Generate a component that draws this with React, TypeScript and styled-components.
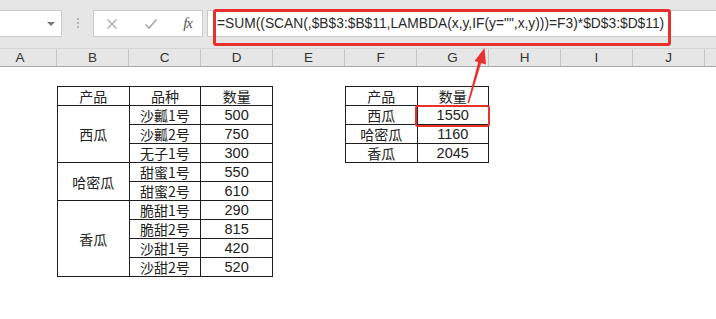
import React from 'react';
import styled, { createGlobalStyle } from 'styled-components';

const GlobalStyle = createGlobalStyle`
  html, body {
    margin: 0;
    padding: 0;
    background: #fff;
  }
  body {
    font-family: "Liberation Sans", "Noto Sans CJK SC", sans-serif;
    color: #222;
  }
`;

const COLS = '57px repeat(9, 72px) 1fr';
const RED = '#e8312c';

const Window = styled.div`
  position: relative;
  width: 716px;
  height: 319px;
  overflow: hidden;
  background: #fff;
`;

/* ---- formula bar ---- */

const FormulaBar = styled.div`
  display: flex;
  align-items: flex-start;
  height: 48px;
  padding-top: 10px;
  box-sizing: border-box;
  background: #e6e6e6;
`;

const Field = styled.div`
  height: 27px;
  box-sizing: border-box;
  background: #fff;
  border: 1px solid #cacaca;
  display: flex;
  align-items: center;
`;

const NameBox = styled(Field)`
  width: 62px;
  border-left: none;
  justify-content: flex-end;
  padding-right: 6px;
`;

const DropCaret = styled.span`
  width: 0;
  height: 0;
  border-left: 4px solid transparent;
  border-right: 4px solid transparent;
  border-top: 4px solid #777;
`;

const Grip = styled.div`
  display: flex;
  flex-direction: column;
  gap: 2px;
  margin: 8px 14px 0 15px;
  span {
    width: 2px;
    height: 2px;
    background: #b3b3b3;
  }
`;

const FuncBox = styled(Field)`
  width: 110px;
  padding: 0 10px 0 12px;
  justify-content: space-between;
`;

const Fx = styled.span`
  font-family: "Liberation Serif", serif;
  font-style: italic;
  font-size: 15px;
  color: #555;
  letter-spacing: -1px;
`;

const FormulaBox = styled(Field)`
  position: relative;
  flex: 1;
  margin-left: 4px;
  border-right: none;
  padding-left: 9px;
`;

const FormulaText = styled.span`
  font-family: "Liberation Sans", sans-serif;
  font-size: 13.8px;
  color: #2a2a2a;
  white-space: nowrap;
`;

const Callout = styled.div`
  position: absolute;
  left: 5px;
  top: -2px;
  width: 458px;
  height: 37px;
  box-sizing: border-box;
  border: 3px solid ${RED};
  border-radius: 3px;
  pointer-events: none;
`;

/* ---- column headers ---- */

const HeaderRow = styled.div`
  display: grid;
  grid-template-columns: ${COLS};
  height: 19px;
  box-sizing: border-box;
  background: #e6e6e6;
  border-top: 1px solid #d6d6d6;
  border-bottom: 1px solid #a8a8a8;
`;

const ColHead = styled.div<{ $first?: boolean }>`
  border-right: 1px solid #c4c4c4;
  display: flex;
  align-items: center;
  justify-content: center;
  font-size: 13.5px;
  color: #333;
  padding-right: ${p => (p.$first ? '16px' : '0')};
  &:last-child {
    border-right: none;
  }
`;

/* ---- sheet ---- */

const Sheet = styled.div`
  display: grid;
  grid-template-columns: ${COLS};
  grid-auto-rows: 19px;
`;

const Block = styled.div<{ $col: string; $row: string }>`
  grid-column: ${p => p.$col};
  grid-row: ${p => p.$row};
`;

const Table = styled.table`
  width: 100%;
  height: 100%;
  border-collapse: collapse;
  table-layout: fixed;
`;

const Cell = styled.td<{ $num?: boolean; $mark?: boolean }>`
  position: relative;
  border: 1px solid #1e1e1e;
  padding: 0;
  height: 18px;
  text-align: center;
  vertical-align: middle;
  font-family: ${p =>
    p.$num ? '"Liberation Sans", sans-serif' : '"Noto Sans CJK SC", sans-serif'};
  font-size: ${p => (p.$num ? '14.5px' : '14px')};
  line-height: 16px;
  color: #222;
  &::after {
    content: '';
    display: ${p => (p.$mark ? 'block' : 'none')};
    position: absolute;
    left: -3px;
    top: -1px;
    right: -2px;
    bottom: -3px;
    border: 2.5px solid ${RED};
    border-radius: 3px;
  }
`;

const Arrow = styled.svg`
  position: absolute;
  left: 0;
  top: 0;
  pointer-events: none;
`;

const letters = ['A', 'B', 'C', 'D', 'E', 'F', 'G', 'H', 'I', 'J', ''];

const melons = [
  { name: '西瓜', kinds: [['沙瓤1号', '500'], ['沙瓤2号', '750'], ['无子1号', '300']] },
  { name: '哈密瓜', kinds: [['甜蜜1号', '550'], ['甜蜜2号', '610']] },
  { name: '香瓜', kinds: [['脆甜1号', '290'], ['脆甜2号', '815'], ['沙甜1号', '420'], ['沙甜2号', '520']] },
];

const totals = [
  ['西瓜', '1550'],
  ['哈密瓜', '1160'],
  ['香瓜', '2045'],
];

const formula = '=SUM((SCAN(,$B$3:$B$11,LAMBDA(x,y,IF(y="",x,y)))=F3)*$D$3:$D$11)';

export default function App() {
  return (
    <Window>
      <GlobalStyle />
      <FormulaBar>
        <NameBox>
          <DropCaret />
        </NameBox>
        <Grip>
          <span />
          <span />
          <span />
        </Grip>
        <FuncBox>
          <svg width="12" height="12" viewBox="0 0 12 12">
            <path d="M1.5 1.5 L10.5 10.5 M10.5 1.5 L1.5 10.5" stroke="#a8a8a8" strokeWidth="1.4" fill="none" />
          </svg>
          <svg width="14" height="12" viewBox="0 0 14 12">
            <path d="M1.5 6.5 L5 10 L12.5 1.5" stroke="#a8a8a8" strokeWidth="1.6" fill="none" />
          </svg>
          <Fx>fx</Fx>
        </FuncBox>
        <FormulaBox>
          <FormulaText>{formula}</FormulaText>
          <Callout />
        </FormulaBox>
      </FormulaBar>

      <HeaderRow>
        {letters.map((l, i) => (
          <ColHead key={i} $first={i === 0}>
            {l}
          </ColHead>
        ))}
      </HeaderRow>

      <Sheet>
        <Block $col="2 / 5" $row="2 / 12">
          <Table>
            <tbody>
              <tr>
                <Cell>产品</Cell>
                <Cell>品种</Cell>
                <Cell>数量</Cell>
              </tr>
              {melons.map(m =>
                m.kinds.map(([kind, qty], i) => (
                  <tr key={kind}>
                    {i === 0 && <Cell rowSpan={m.kinds.length}>{m.name}</Cell>}
                    <Cell>{kind}</Cell>
                    <Cell $num>{qty}</Cell>
                  </tr>
                ))
              )}
            </tbody>
          </Table>
        </Block>

        <Block $col="6 / 8" $row="2 / 6">
          <Table>
            <tbody>
              <tr>
                <Cell>产品</Cell>
                <Cell>数量</Cell>
              </tr>
              {totals.map(([name, sum], i) => (
                <tr key={name}>
                  <Cell>{name}</Cell>
                  <Cell $num $mark={i === 0}>
                    {sum}
                  </Cell>
                </tr>
              ))}
            </tbody>
          </Table>
        </Block>
      </Sheet>

      <Arrow width="716" height="319">
        <polygon points="467.5,103 469,103.3 481.6,61.5 478.6,60.7" fill={RED} />
        <polygon points="484.5,48 486,64.5 474.5,61" fill={RED} />
      </Arrow>
    </Window>
  );
}
